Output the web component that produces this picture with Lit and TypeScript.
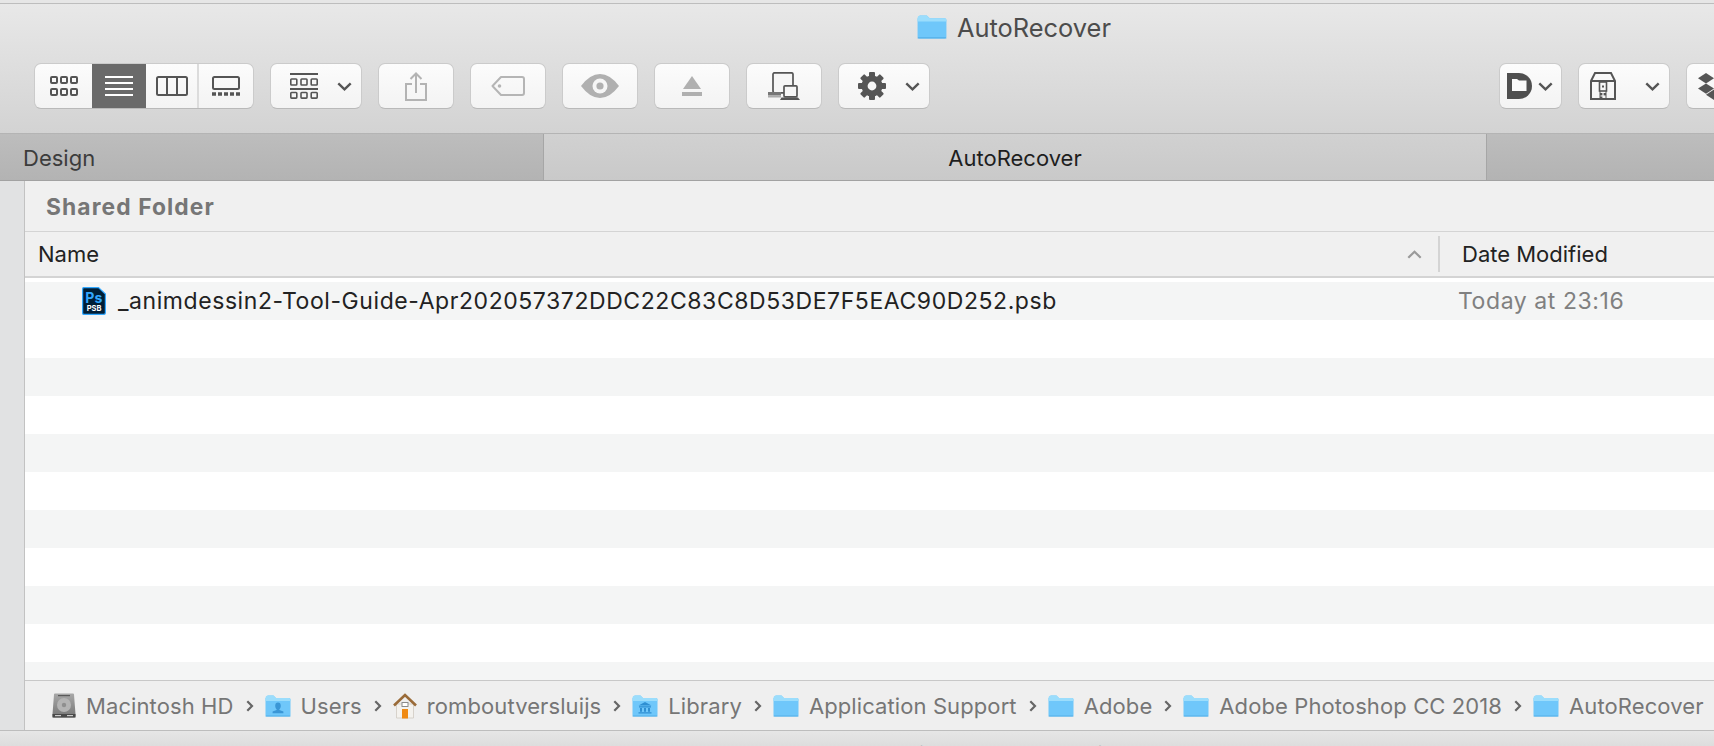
import { LitElement, html, css, svg } from "lit";
import { customElement } from "lit/decorators.js";

const chev = () => html`<svg class="chev" width="15" height="9" viewBox="0 0 15 9"><polyline points="1.3,1.3 7.5,7.3 13.7,1.3" fill="none" stroke="#555" stroke-width="2.4"/></svg>`;

const folder = (overlay: unknown = null) => html`<svg class="ico" width="26" height="22" viewBox="0 0 26 22" preserveAspectRatio="none">
  <path d="M1 3 Q1 0.5 3 0.5 H8.5 L11 3 H24 Q25.5 3 25.5 4.5 V20 Q25.5 21.5 24 21.5 H2 Q0.5 21.5 0.5 20 V3 Z" fill="#6fc7fa"/>
  <path d="M0.5 3 Q0.5 .5 3 .5 H8.5 L11 3 H24 Q25.5 3 25.5 4.5 V6 H.5 Z" fill="#9bddfc"/>
  <rect x=".5" y="20.5" width="25" height="1" rx=".5" fill="#54b0e8"/>${overlay}</svg>`;

const person = svg`<path d="M13 7.5 a2.8 3.4 0 0 1 2.8 3.4 c0 1.5 -.8 2.6 -1.4 3.3 v.8 l4 1.6 v1.6 H7.6 v-1.6 l4 -1.6 v-.8 c-.6 -.7 -1.4 -1.8 -1.4 -3.3 A2.8 3.4 0 0 1 13 7.5 Z" fill="#3a96d6"/>`;
const bank = svg`<path d="M13 7 L19.5 10.5 H6.5 Z M7 11.3 H19 V12.4 H7 Z M8 13 H10 V16.8 H8 Z M12 13 H14 V16.8 H12 Z M16 13 H18 V16.8 H16 Z M6.5 17.3 H19.5 V18.6 H6.5 Z" fill="#2f8fd2"/>`;

const hd = html`<svg class="ico" width="24" height="25" viewBox="0 0 24 25">
  <defs><linearGradient id="hdg" x1="0" y1="0" x2="0" y2="1"><stop offset="0" stop-color="#a8a8a8"/><stop offset="1" stop-color="#767676"/></linearGradient></defs>
  <path d="M2 1.5 Q2 .5 3 .5 H21 Q22 .5 22 1.5 L23.5 21 V23 Q23.5 24.5 22 24.5 H2 Q.5 24.5 .5 23 V21 Z" fill="url(#hdg)"/>
  <circle cx="12" cy="12" r="7" fill="#b4b4b4"/><circle cx="12" cy="12" r="2.2" fill="#8f8f8f"/>
  <rect x="6" y="2" width="12" height="1.2" fill="#5a5a5a"/><rect x=".5" y="21" width="23" height="3.5" fill="#4a4a4a"/>
  <rect x="3" y="22" width="6" height="1.2" fill="#ccc"/><rect x="15" y="22" width="6" height="1.2" fill="#ccc"/>
</svg>`;

const home = html`<svg class="ico" width="24" height="26" viewBox="0 0 24 26">
  <path d="M3.5 11 H20.5 V25 H3.5 Z" fill="#f4f2ee" stroke="#cfcac2" stroke-width=".8"/>
  <path d="M1 12.5 L12 2 L23 12.5" fill="none" stroke="#9a6b38" stroke-width="2.6"/>
  <rect x="9" y="9.5" width="6" height="4" fill="#fff" stroke="#8b8b8b" stroke-width="1"/>
  <rect x="9" y="16" width="6" height="9.5" fill="#f08a12"/>
</svg>`;

const ps = html`<svg class="ico" width="24" height="28" viewBox="0 0 24 28">
  <path d="M1.8 .6 H16.5 L23.4 7 V25.8 Q23.4 27.4 21.8 27.4 H1.8 Q.6 27.4 .6 26 V2 Q.6 .6 1.8 .6 Z" fill="#001e36" stroke="#31a8ff" stroke-width="1.2"/>
  <text x="11.8" y="15.5" text-anchor="middle" class="pst">Ps</text>
  <text x="12" y="24" text-anchor="middle" class="psb">PSB</text>
</svg>`;

const grid3 = (y1: number, y2: number) => svg`
  ${[1, 11, 21].map((x) => svg`<rect x=${x} y=${y1} width="6" height="6" rx="1" fill="none" stroke="#555" stroke-width="2"/><rect x=${x} y=${y2} width="6" height="6" rx="1" fill="none" stroke="#555" stroke-width="2"/>`)}`;

const icons = {
  grid: html`<svg width="28" height="20" viewBox="0 0 28 20">${grid3(1, 13)}</svg>`,
  list: html`<svg width="28" height="20" viewBox="0 0 28 20"><path d="M0 1 H28 M0 7 H28 M0 13 H28 M0 19 H28" stroke="#fff" stroke-width="1.8"/></svg>`,
  cols: html`<svg width="32" height="20" viewBox="0 0 32 20"><rect x="1" y="1" width="30" height="18" rx="1.5" fill="none" stroke="#555" stroke-width="2"/><path d="M11 1 V19 M21 1 V19" stroke="#555" stroke-width="2"/></svg>`,
  gallery: html`<svg width="28" height="20" viewBox="0 0 28 20"><rect x="1" y="1" width="26" height="12" rx="1.5" fill="none" stroke="#555" stroke-width="2"/><path d="M0 18 H28" stroke="#555" stroke-width="3.4" stroke-dasharray="4 2"/></svg>`,
  groupBy: html`<svg width="28" height="26" viewBox="0 0 28 26"><path d="M0 1 H28 M0 16 H28" stroke="#555" stroke-width="1.8"/>${[0.8, 11, 21.2].map((x) => svg`<rect x=${x} y="6" width="6" height="6" rx=".8" fill="none" stroke="#555" stroke-width="1.6"/><rect x=${x} y="19.5" width="6" height="5.6" rx=".8" fill="none" stroke="#555" stroke-width="1.6"/>`)}</svg>`,
  share: html`<svg width="22" height="29" viewBox="0 0 22 29"><path d="M7 12 H1 V28 H21 V12 H15" fill="none" stroke="#b3b3b3" stroke-width="2"/><path d="M11 21 V1.5 M5.5 7 L11 1.5 L16.5 7" fill="none" stroke="#b3b3b3" stroke-width="2"/></svg>`,
  tag: html`<svg width="34" height="20" viewBox="0 0 34 20"><path d="M10 1 H31 Q33 1 33 3 V17 Q33 19 31 19 H10 L1.5 10 Z" fill="none" stroke="#b5b5b5" stroke-width="2" stroke-linejoin="round"/><circle cx="8.5" cy="10" r="1.8" fill="#b5b5b5"/></svg>`,
  eye: html`<svg width="38" height="24" viewBox="0 0 38 24"><path d="M0 12 Q9 0 19 0 Q29 0 38 12 Q29 24 19 24 Q9 24 0 12 Z" fill="#b0b0b0"/><circle cx="19" cy="12" r="7.5" fill="#f6f6f6"/><circle cx="19" cy="12" r="3.6" fill="#b0b0b0"/></svg>`,
  eject: html`<svg width="20" height="20" viewBox="0 0 20 20"><path d="M10 0 L19 13 H1 Z" fill="#b0b0b0"/><rect y="16" width="20" height="4" fill="#b0b0b0"/></svg>`,
  net: html`<svg width="32" height="28" viewBox="0 0 32 28"><rect x="5" y="0.8" width="20" height="20" rx="1.5" fill="#f6f6f6" stroke="#555" stroke-width="1.7"/><rect x="16" y="13.8" width="13" height="11" rx="1" fill="#f6f6f6" stroke="#555" stroke-width="1.7"/><path d="M12 28 L13.5 25.4 H30 L32 28 Z" fill="#555"/><rect x="0" y="20" width="13" height="3.5" fill="#777"/><rect x="0" y="23.5" width="13" height="2" fill="#aaa"/></svg>`,
  gear: html`<svg width="28" height="28" viewBox="0 0 28 28"><g fill="#555">${[0, 45, 90, 135, 180, 225, 270, 315].map((r) => svg`<rect x="11" y="0" width="6" height="6" rx="1" transform="rotate(${r} 14 14)"/>`)}<circle cx="14" cy="14" r="10.5"/></g><circle cx="14" cy="14" r="4.4" fill="#f6f6f6"/></svg>`,
  d: html`<svg width="26" height="26" viewBox="0 0 26 26"><path d="M0 0 H12 A13 13 0 0 1 12 26 H0 Z" fill="#4f4f4f"/><path d="M5 6 H10 L12 7.5 H19.5 V18 H5 Z" fill="#fbfbfb"/></svg>`,
  box: html`<svg width="26" height="28" viewBox="0 0 26 28"><path d="M1 27 V9 L5 1 H21 L25 9 V27 Z M1 9 H25" fill="none" stroke="#555" stroke-width="2"/><rect x="9.5" y="10" width="7" height="9" fill="none" stroke="#555" stroke-width="1.6"/><rect x="12" y="13.5" width="2" height="2" fill="#555"/><rect x="10" y="21" width="2.4" height="2.4" fill="#555"/><rect x="13.6" y="21" width="2.4" height="2.4" fill="#555"/><rect x="10" y="24.5" width="2.4" height="2.4" fill="#555"/><path d="M10 19 V27 M16 19 V27" stroke="#555" stroke-width="1"/></svg>`,
  drop: html`<svg width="40" height="27" viewBox="0 0 40 27"><g fill="#555"><path d="M8 0 L16 5.2 L8 10.4 L0 5.2 Z"/><path d="M8 10.4 L16 15.6 L8 20.8 L0 15.6 Z"/><path d="M16 16.6 L24 21.8 L16 27 L8 21.8 Z"/><path d="M24 0 L32 5.2 L24 10.4 L16 5.2 Z"/></g></svg>`,
};

const crumbs: [unknown, string][] = [
  [hd, "Macintosh HD"],
  [folder(person), "Users"],
  [home, "romboutversluijs"],
  [folder(bank), "Library"],
  [folder(), "Application Support"],
  [folder(), "Adobe"],
  [folder(), "Adobe Photoshop CC 2018"],
  [folder(), "AutoRecover"],
];

@customElement("app-root")
export class AppRoot extends LitElement {
  static styles = css`
    :host {
      display: flex;
      flex-direction: column;
      width: 1714px;
      height: 746px;
      overflow: hidden;
      font-family: "Inter", "Liberation Sans", sans-serif;
      color: #222;
      background: #fff;
    }
    .strip { flex: 0 0 3px; background: #e6e6e6; border-bottom: 1px solid #bdbdbd; }
    .toolbar {
      flex: 0 0 129px;
      background: linear-gradient(#e8e8e8, #d3d3d3);
      border-bottom: 1px solid #b4b4b4;
      overflow: hidden;
    }
    .title {
      height: 46px;
      display: flex;
      align-items: center;
      gap: 10px;
      padding-left: 917px;
      font-size: 25.4px;
      color: #4c4c4c;
    }
    .title svg { width: 30px; height: 24px; }
    .buttons {
      display: flex;
      gap: 16px;
      padding: 13px 0 0 34px;
      height: 46px;
    }
    .btn {
      flex: none;
      box-sizing: border-box;
      height: 46px;
      width: 76px;
      display: flex;
      align-items: center;
      justify-content: center;
      background: linear-gradient(#fcfcfc, #f3f3f3);
      border: 1px solid #cbcbcb;
      border-bottom-color: #b9b9b9;
      border-radius: 7px;
    }
    .btn.menu { width: 92px; justify-content: flex-start; padding-left: 19px; }
    .btn.menu .chev { margin-left: 19px; }
    .btn.d { width: 63px; justify-content: flex-start; padding-left: 7px; }
    .btn.d .chev { margin-left: 5px; }
    .btn.box { padding-left: 11px; }
    .btn.box .chev { margin-left: 29px; }
    .btn.drop { padding-left: 11px; }
    .spacer { flex: 0 0 537px; }
    .seg { width: 220px; padding: 0; justify-content: flex-start; overflow: hidden; }
    .seg span {
      display: flex;
      align-items: center;
      justify-content: center;
      height: 100%;
    }
    .seg .a { width: 57px; }
    .seg .b { width: 54px; background: #6a6a6a; height: calc(100% + 2px); }
    .seg .c { width: 53px; border-right: 2px solid #dcdcdc; box-sizing: border-box; }
    .seg .e { width: 54px; }
    .tabs { flex: 0 0 47px; display: flex; font-size: 22px; border-bottom: 1px solid #a2a2a2; box-sizing: border-box; }
    .tab {
      display: flex;
      align-items: center;
      padding-top: 1px;
      box-sizing: border-box;
      background: linear-gradient(#bdbdbd, #b3b3b3);
      color: #3c3c3c;
    }
    .tab.l { width: 544px; padding-left: 23px; border-right: 1px solid #a6a6a6; }
    .tab.m { width: 943px; justify-content: center; background: linear-gradient(#d1d1d1, #c9c9c9); color: #1e1e1e; border-right: 1px solid #a6a6a6; }
    .tab.r { flex: 1; }
    .main { flex: 0 0 549px; height: 549px; display: flex; }
    .side { flex: 0 0 24px; background: #e1e2e3; border-right: 1px solid #c2c2c2; }
    .content { flex: 1; display: flex; flex-direction: column; min-width: 0; min-height: 0; }
    .pathhead {
      flex: 0 0 49px;
      display: flex;
      align-items: center;
      padding: 1px 0 0 21px;
      background: #f0f0f0;
      border-bottom: 2px solid #d4d4d4;
      font-weight: 700;
      font-size: 22.8px;
      letter-spacing: 1.1px;
      color: #767676;
      margin-bottom: -1px;
    }
    .colhead {
      flex: 0 0 44px;
      display: flex;
      align-items: center;
      background: #f0f0f0;
      border-bottom: 2px solid #d4d4d4;
      font-size: 22px;
      color: #222;
    }
    .colname { width: 1413px; box-sizing: border-box; padding-left: 13px; display: flex; align-items: center; height: 100%; }
    .colname .sort { margin-left: auto; margin-right: 16px; }
    .vsep { width: 2px; height: 36px; background: #d4d4d4; }
    .coldate { padding-left: 22px; }
    .list { flex: 1 1 0; min-height: 0; overflow: hidden; padding-top: 4px; background: #fff; }
    .row {
      height: 38px;
      display: flex;
      align-items: center;
      font-size: 23px;
      letter-spacing: 0.57px;
      color: #222;
    }
    .row:nth-child(odd) { background: #f4f5f5; }
    .rname { width: 1433px; box-sizing: border-box; padding-left: 57px; display: flex; align-items: center; gap: 12px; }
    .rdate { color: #808080; }
    .ico { flex: none; display: block; }
    .pst { font: 700 14px "Inter", sans-serif; fill: #31a8ff; letter-spacing: 0; }
    .psb { font: 700 7.5px "Inter", sans-serif; fill: #fff; letter-spacing: 0; }
    .pathbar {
      flex: 0 0 49px;
      display: flex;
      align-items: center;
      padding-left: 27px;
      background: #efefef;
      border-top: 1px solid #c8c8c8;
      font-size: 22px;
      letter-spacing: 0.1px;
      color: #767676;
      white-space: nowrap;
      overflow: hidden;
    }
    .crumb { display: flex; align-items: center; gap: 10px; flex: none; }
    .sep { flex: none; margin: 0 11px 0 12px; display: block; }
    .status {
      flex: 1;
      min-height: 0;
      overflow: hidden;
      border-top: 1px solid #bdbdbd;
      background: linear-gradient(#e6e6e6, #dddddd);
      padding: 12px 0 0 905px;
      font-size: 20.4px;
      line-height: 24px;
      color: #6a6a6a;
      white-space: nowrap;
    }
  `;

  render() {
    return html`
      <div class="strip"></div>
      <div class="toolbar">
        <div class="title">${folder()}<span>AutoRecover</span></div>
        <div class="buttons">
          <div class="btn seg">
            <span class="a">${icons.grid}</span>
            <span class="b">${icons.list}</span>
            <span class="c">${icons.cols}</span>
            <span class="e">${icons.gallery}</span>
          </div>
          <div class="btn menu">${icons.groupBy}${chev()}</div>
          <div class="btn">${icons.share}</div>
          <div class="btn">${icons.tag}</div>
          <div class="btn">${icons.eye}</div>
          <div class="btn">${icons.eject}</div>
          <div class="btn">${icons.net}</div>
          <div class="btn menu">${icons.gear}${chev()}</div>
          <div class="spacer"></div>
          <div class="btn d">${icons.d}${chev()}</div>
          <div class="btn menu box">${icons.box}${chev()}</div>
          <div class="btn menu drop">${icons.drop}</div>
        </div>
      </div>
      <div class="tabs">
        <div class="tab l">Design</div>
        <div class="tab m">AutoRecover</div>
        <div class="tab r"></div>
      </div>
      <div class="main">
        <div class="side"></div>
        <div class="content">
          <div class="pathhead">Shared Folder</div>
          <div class="colhead">
            <div class="colname">
              <span>Name</span>
              <svg class="sort" width="15" height="9" viewBox="0 0 15 9"><polyline points="1.3,7.7 7.5,1.7 13.7,7.7" fill="none" stroke="#9a9a9a" stroke-width="2.2"/></svg>
            </div>
            <div class="vsep"></div>
            <div class="coldate">Date Modified</div>
          </div>
          <div class="list">
            <div class="row">
              <div class="rname">${ps}<span>_animdessin2-Tool-Guide-Apr202057372DDC22C83C8D53DE7F5EAC90D252.psb</span></div>
              <div class="rdate">Today at 23:16</div>
            </div>
            ${Array.from({ length: 10 }, () => html`<div class="row"></div>`)}
          </div>
          <div class="pathbar">
            ${crumbs.map(([icon, label], i) => html`
              <div class="crumb">${icon}<span>${label}</span></div>
              ${i < crumbs.length - 1 ? html`<svg class="sep" width="8" height="12" viewBox="0 0 8 12"><polyline points="1.3,1.2 6,6 1.3,10.8" fill="none" stroke="#666" stroke-width="2.2"/></svg>` : null}
            `)}
          </div>
        </div>
      </div>
      <div class="status">1 item, 51,26 GB available</div>
    `;
  }
}
